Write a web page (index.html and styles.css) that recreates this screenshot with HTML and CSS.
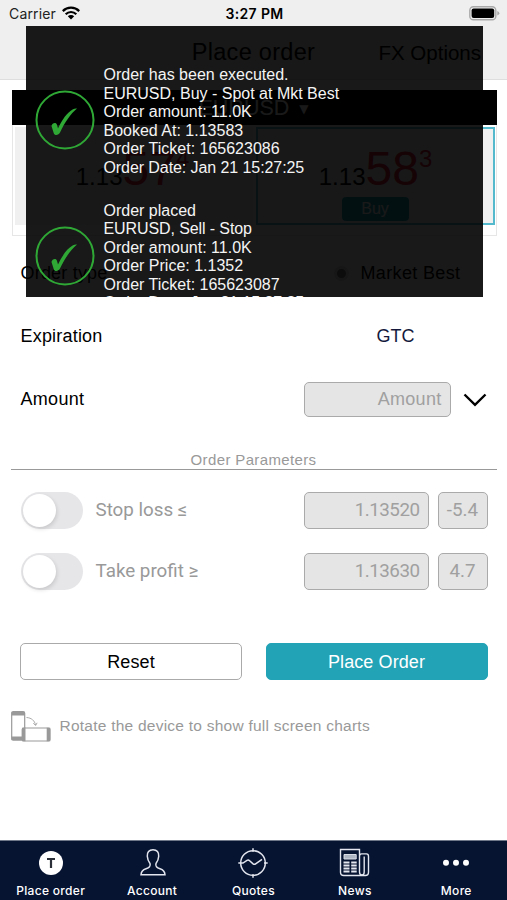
FILE: index.html
```html
<!DOCTYPE html>
<html lang="en">
<head>
<meta charset="utf-8">
<title>Place order</title>
<link rel="stylesheet" href="styles.css">
</head>
<body>
<div class="screen">
  <header class="status">
    <span class="carrier">Carrier
    <svg class="wifi" width="18" height="14" viewBox="0 0 18 14"><g fill="none" stroke="#000" stroke-width="2.2"><path d="M.8 5.1a11.6 11.6 0 0 1 16.4 0"/><path d="M3.7 8.2a7.5 7.5 0 0 1 10.6 0"/></g><path d="M9 13.4 5.8 10.2a4.6 4.6 0 0 1 6.4 0z"/></svg></span>
    <span class="time">3:27 PM</span>
    <svg class="battery" width="31" height="15" viewBox="0 0 31 15"><rect x=".8" y=".8" width="26" height="13" rx="3.6" fill="#efefef" stroke="#a9a9a9" stroke-width="1.4"/><rect x="2.6" y="2.6" width="22.6" height="9.4" rx="2"/><path d="M28.3 5v4.600q2-.8 2-2.300t-2-2.300z" fill="#a9a9a9"/></svg>
  </header>
  <nav class="navbar">
    <h1>Place order</h1>
    <span class="options">FX Options</span>
  </nav>

  <section class="quote">
    <div class="pair"><span>EURUSD</span><span class="caret">▼</span></div>
    <div class="prices">
      <div class="side sell">
        <div class="price"><span>1.13</span><b>57</b><sup>4</sup></div>
      </div>
      <div class="side buy">
        <div class="price"><span>1.13</span><b>58</b><sup>3</sup></div>
        <span class="tag">Buy</span>
      </div>
    </div>
  </section>

  <main>
    <div class="row"><span class="label type">Order type</span><span class="best"><i class="radio"></i><span class="besttext">Market Best</span></span></div>
    <div class="row"><span class="label exp">Expiration</span><span class="gtc">GTC</span></div>
    <div class="row"><span class="label amt">Amount</span><span class="field amount">Amount</span>
      <svg class="chevron" width="24" height="14" viewBox="0 0 24 14"><path d="M1.500 1.500 12 11.800 22.500 1.500" fill="none" stroke="#000" stroke-width="2.400"/></svg></div>
    <h2><span>Order Parameters</span></h2>
    <div class="row param"><i class="toggle"></i><span class="name">Stop loss ≤</span><span class="field value">1.13520</span><span class="field pips">-5.4</span></div>
    <div class="row param"><i class="toggle"></i><span class="name">Take profit ≥</span><span class="field value">1.13630</span><span class="field pips">4.7</span></div>
    <div class="actions"><button class="reset">Reset</button><button class="place">Place Order</button></div>
    <div class="rotate">
      <svg width="40" height="32" viewBox="0 0 40 32"><rect x=".7" y=".7" width="13" height="28.500" rx="1.500" fill="#fff" stroke="#999" stroke-width="1.200"/><path d="M.5 1h13.500v3.500H.5zM.5 25.500h13.500V29H.5z" fill="#999"/><path d="M15.500 6.500c5 .3 8.200 3.200 9 7.500m-2.200-1.800 2.300 2.300 1.500-2.700" fill="none" stroke="#aaa"/><rect x="11.200" y="17" width="27.800" height="13" rx="1.500" fill="#fff" stroke="#999" stroke-width="1.200"/><path d="M11 16.800h3.500v13.400H11zM35.700 16.800h3.500v13.400h-3.500z" fill="#999"/></svg>
      <span>Rotate the device to show full screen charts</span>
    </div>
  </main>

  <footer class="tabs">
    <a><svg width="30" height="30" viewBox="0 0 30 30"><circle cx="15" cy="15" r="12" fill="#fff"/><path d="M11 11h8M15 11v9" stroke="#2b3038" stroke-width="2.200"/></svg><span>Place order</span></a>
    <a class="account"><svg width="30" height="30" viewBox="0 0 30 30"><path d="M15 1.700c-4 0-6 2.700-5.700 6.500.2 3.300 1.300 5.500 2.700 7.300.9 2.800-.8 4.300-4 5.300-3.700 1.100-4.800 2.900-5 5.900h24c-.2-3-1.300-4.800-5-5.900-3.200-1-4.900-2.500-4-5.300 1.400-1.800 2.500-4 2.700-7.300.3-3.800-1.700-6.500-5.700-6.500z" fill="none" stroke="#e3e6ee" stroke-width="1.500"/></svg><span>Account</span></a>
    <a><svg width="30" height="30" viewBox="0 0 30 30"><g fill="none" stroke="#e3e6ee" stroke-width="1.500"><circle cx="15" cy="15" r="12.300"/><path d="M15 .3v3.500M15 26.200v3.500M.3 15H5l4-2.700q1.400-.7 2.600.4l3.500 3.200q1.200.9 2.500 0l6.400-4.500M26 15h3.700"/></g></svg><span>Quotes</span></a>
    <a class="news"><svg width="32" height="30" viewBox="0 0 32 30"><g fill="none" stroke="#e3e6ee" stroke-width="1.400"><path d="M21.500 23.500v-22h-19v22.800q0 3.200 3.300 3.200h21.500q3.200 0 3.200-3.200V8.200q0-2.300-2-2.300h-5q-2 0-2 2.300v15.800q0 3 2.500 3 2.200 0 2.200-3V8.500"/><path d="M5.500 14.500h6M5.500 17.500h6M5.500 20.500h6M5.500 23.500h6M13.200 14.500h5.500M13.200 17.500h5.500M13.200 20.500h5.500M13.200 23.500h5.500" stroke-width="2"/></g><path d="M6 6.500h12.200v4.500H6z" fill="#aeb5c3" stroke="#d9dde6"/></svg><span>News</span></a>
    <a><svg width="30" height="30" viewBox="0 0 30 30"><g fill="#fff"><circle cx="5" cy="14.800" r="3"/><circle cx="15" cy="14.800" r="3"/><circle cx="25" cy="14.800" r="3"/></g></svg><span>More</span></a>
  </footer>

  <div class="toast">
    <div class="note">
      <svg class="check" width="60" height="60" viewBox="0 0 60 60"><circle cx="30" cy="30" r="28.500" fill="none" stroke="#2fa836" stroke-width="2"/><path d="M16.500 36c.8-3.500 4.800-4 5.500-1l1 3.500C27 30 32 22.500 38 19.300c1.300-.8 2.700-1 4-.8C35.500 24 30 32 25 42.500c-1.300 3-5.500 3.500-6.300.5z" fill="#2fa836"/></svg>
      <p><span>Order has been executed.</span><span>EURUSD, Buy - Spot at Mkt Best</span><span>Order amount: 11.0K</span><span>Booked At: 1.13583</span><span>Order Ticket: 165623086</span><span class="date">Order Date: Jan 21 15:27:25</span></p>
    </div>
    <div class="note">
      <svg class="check" width="60" height="60" viewBox="0 0 60 60"><circle cx="30" cy="30" r="28.500" fill="none" stroke="#2fa836" stroke-width="2"/><path d="M16.500 36c.8-3.500 4.800-4 5.500-1l1 3.500C27 30 32 22.500 38 19.300c1.300-.8 2.700-1 4-.8C35.500 24 30 32 25 42.500c-1.300 3-5.500 3.500-6.300.5z" fill="#2fa836"/></svg>
      <p><span>Order placed</span><span class="stop">EURUSD, Sell - Stop</span><span>Order amount: 11.0K</span><span>Order Price: 1.1352</span><span>Order Ticket: 165623087</span><span class="date">Order Date: Jan 21 15:27:25</span></p>
    </div>
  </div>
</div>
</body>
</html>
```
FILE: styles.css
```css
* { box-sizing: border-box; }
body { margin: 0; background: #fff; color: #000; font-family: "Liberation Sans", Arial, sans-serif; }
.screen { position: relative; width: 507px; height: 900px; overflow: hidden; display: flex; flex-direction: column; }
svg { display: block; flex: none; }
.status { height: 26px; flex: none; background: #efefef; display: grid; grid-template-columns: 1fr auto 1fr; align-items: center; padding: 1px 7px 0 9px; font-family: Inter, sans-serif; font-size: 14px; }
.carrier { display: flex; align-items: center; gap: 6px; color: #222; letter-spacing: .15px; }
.time { font-weight: 600; letter-spacing: .35px; }
.wifi { margin-top: -1px; }
.battery { justify-self: end; }
.navbar { height: 54px; flex: none; background: #efefef; border-bottom: 1px solid #dedede; display: grid; grid-template-columns: 1fr auto 1fr; align-items: center; padding: 0 26px; }
h1 { grid-column: 2; margin: 0; font-weight: 400; font-size: 23.500px; letter-spacing: .3px; white-space: nowrap; }
.options { justify-self: end; font-size: 20.500px; white-space: nowrap; }
.quote { height: 146px; flex: none; margin: 10px 10.500px 0 11.500px; border: 1px solid #e6e6e6; border-top: 0; }
.pair { height: 35px; margin: 0 -1px; background: #000; color: #fff; display: flex; align-items: center; justify-content: center; gap: 10px; font-size: 21.500px; padding: 2px 1px 0 0; }
.caret { font: 12px "DejaVu Sans", sans-serif; }
.prices { display: flex; justify-content: space-between; padding: 2px 1px 0 2px; }
.side { height: 98px; background: #f0f0f0; display: flex; flex-direction: column; align-items: center; }
.sell { width: 238px; }
.buy { width: 239px; border: 2px solid #55b9cd; }
.price { display: flex; align-items: baseline; height: 70px; font-size: 24px; padding: 17px 0 0 1px; }
.sell .price { padding: 19px 2px 0 0; }
.price b { font-size: 48px; line-height: 46px; font-weight: 400; color: #d02040; }
.price sup { font-size: 24px; line-height: 24px; color: #d02040; align-self: flex-start; margin-top: 1px; }
.tag { width: 67px; height: 24px; flex: none; margin-top: -2px; border-radius: 4px; background: #22a5b8; color: #fff; font-size: 16px; line-height: 24px; text-align: center; }
main { flex: 1; display: flex; flex-direction: column; padding-top: 6px; }
.row { height: 63.200px; flex: none; display: flex; align-items: center; padding: 0 19px 0 20.500px; font-size: 18px; }
.label { width: 283px; flex: none; }
.type, .exp { letter-spacing: .2px; }
.amt { letter-spacing: .3px; }
.best { display: flex; align-items: center; gap: 12px; padding-left: 30px; }
.besttext { letter-spacing: .35px; }
.radio { width: 15px; height: 15px; border-radius: 50%; border: 3px solid #ddd; background: #777; }
.gtc { width: 184px; text-align: center; color: #14193c; }
.field { height: 37px; border: 1.500px solid #aaa; border-radius: 5px; background: #e5e5e5; color: #a0a0a0; display: flex; align-items: center; justify-content: flex-end; padding-right: 8px; }
.amount { width: 147px; height: 35px; letter-spacing: .3px; }
.chevron { margin-left: 12px; }
h2 { margin: 17px 10.500px 0; height: 21px; border-bottom: 1.500px solid #999; color: #999; font-size: 15px; letter-spacing: .36px; font-weight: 400; line-height: 22px; text-align: center; }
.param { height: 61px; color: #999; font-family: Roboto, sans-serif; font-size: 18.800px; }
h2 + .param { margin-top: 10px; }
.toggle { width: 62px; height: 37px; border-radius: 19px; background: #e6e6e9; padding: 2px; }
.toggle::after { content: ""; display: block; width: 33px; height: 33px; border-radius: 50%; background: #fff; box-shadow: 1px 2px 4px #0002; }
.name { width: 208px; margin-left: 13px; }
.value { width: 125px; letter-spacing: -.5px; }
.pips { width: 50px; margin-left: 9px; padding: 0; justify-content: center; }
.actions { display: flex; justify-content: space-between; padding: 0 19.500px 0 20px; margin-top: 41px; }
button { width: 222px; height: 37px; padding: 2px 0 0; border: 1.500px solid #aaa; border-radius: 5px; background: #fff; color: #000; font: 18px "Liberation Sans", Arial, sans-serif; letter-spacing: .1px; }
.place { background: #22a3b6; border-color: #22a3b6; color: #fff; }
.rotate { display: flex; align-items: center; gap: 9px; margin: 31px 0 0 10.500px; color: #999; font-size: 15.500px; letter-spacing: .24px; }
.rotate span { margin-top: -2px; }
.tabs { height: 60px; flex: none; background: #061331; border-top: 1px solid #6f7888; display: grid; grid-template-columns: repeat(5, 1fr); }
.tabs a { display: flex; flex-direction: column; align-items: center; color: #fff; font: 500 12px/14px Inter, sans-serif; padding-top: 7px; gap: 6px; letter-spacing: .3px; }
.account svg { margin-left: 2px; }
.news svg { margin-right: 2px; }
.toast { position: absolute; left: 25.500px; top: 25.500px; width: 457px; height: 271px; background: rgba(0,0,0,.9); overflow: hidden; padding-top: 39.500px; color: #f4f4f4; }
.note { height: 135.500px; display: flex; padding-left: 9px; gap: 9px; }
.check { margin-top: 25px; }
.note p { margin: 1px 0 0; font-size: 16px; line-height: 18.600px; }
.note p span { display: block; white-space: nowrap; }
.note .date { letter-spacing: -.08px; }
.note .stop { letter-spacing: -.1px; }
```
